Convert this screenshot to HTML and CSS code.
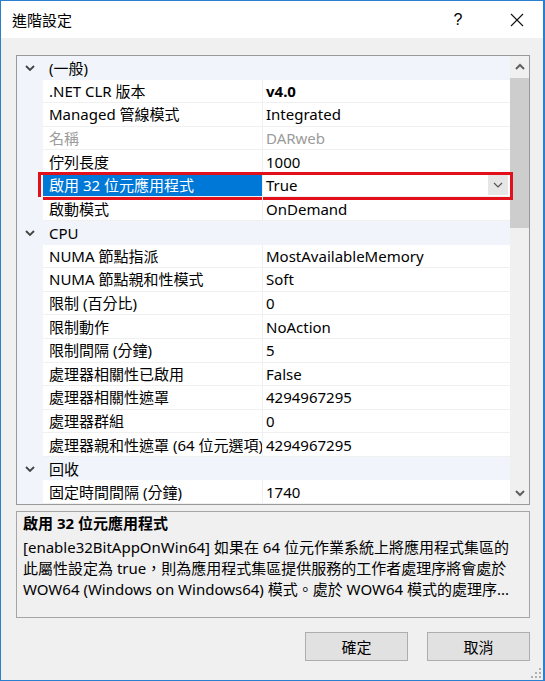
FILE: index.html
```html
<!DOCTYPE html>
<html lang="zh-Hant">
<head>
<meta charset="utf-8">
<title>進階設定</title>
<link rel="stylesheet" href="styles.css">
</head>
<body>
<div class="window">
  <div class="titlebar">
    <span class="title">進階設定</span>
    <span class="help">?</span>
    <span class="close"><svg width="14" height="14" viewBox="0 0 14 14"><path d="M1 1 L13 13 M13 1 L1 13" stroke="#111" stroke-width="1.1" fill="none"/></svg></span>
  </div>
  <div class="body">
    <div class="grid">
      <div class="rows">
        <div class="row cat"><span class="gut"><svg width="10" height="6" viewBox="0 0 10 6"><path d="M1 1 L5 5 L9 1" stroke="#444" stroke-width="1.8" fill="none"/></svg></span><span class="cat-name">(一般)</span></div>
        <div class="row prop"><span class="gut"></span><span class="name">.NET CLR 版本</span><span class="val bold">v4.0</span></div>
        <div class="row prop"><span class="gut"></span><span class="name">Managed 管線模式</span><span class="val">Integrated</span></div>
        <div class="row prop dis"><span class="gut"></span><span class="name">名稱</span><span class="val">DARweb</span></div>
        <div class="row prop"><span class="gut"></span><span class="name">佇列長度</span><span class="val">1000</span></div>
        <div class="row prop sel"><span class="gut"></span><span class="name">啟用 32 位元應用程式</span><span class="val">True<span class="dd"><svg width="10" height="6" viewBox="0 0 10 6"><path d="M1 1 L5 5 L9 1" stroke="#555" stroke-width="1.2" fill="none"/></svg></span></span></div>
        <div class="row prop"><span class="gut"></span><span class="name">啟動模式</span><span class="val">OnDemand</span></div>
        <div class="row cat"><span class="gut"><svg width="10" height="6" viewBox="0 0 10 6"><path d="M1 1 L5 5 L9 1" stroke="#444" stroke-width="1.8" fill="none"/></svg></span><span class="cat-name">CPU</span></div>
        <div class="row prop"><span class="gut"></span><span class="name">NUMA 節點指派</span><span class="val">MostAvailableMemory</span></div>
        <div class="row prop"><span class="gut"></span><span class="name">NUMA 節點親和性模式</span><span class="val">Soft</span></div>
        <div class="row prop"><span class="gut"></span><span class="name">限制 (百分比)</span><span class="val">0</span></div>
        <div class="row prop"><span class="gut"></span><span class="name">限制動作</span><span class="val">NoAction</span></div>
        <div class="row prop"><span class="gut"></span><span class="name">限制間隔 (分鐘)</span><span class="val">5</span></div>
        <div class="row prop"><span class="gut"></span><span class="name">處理器相關性已啟用</span><span class="val">False</span></div>
        <div class="row prop"><span class="gut"></span><span class="name">處理器相關性遮罩</span><span class="val">4294967295</span></div>
        <div class="row prop"><span class="gut"></span><span class="name">處理器群組</span><span class="val">0</span></div>
        <div class="row prop"><span class="gut"></span><span class="name">處理器親和性遮罩 (64 位元選項)</span><span class="val">4294967295</span></div>
        <div class="row cat"><span class="gut"><svg width="10" height="6" viewBox="0 0 10 6"><path d="M1 1 L5 5 L9 1" stroke="#444" stroke-width="1.8" fill="none"/></svg></span><span class="cat-name">回收</span></div>
        <div class="row prop"><span class="gut"></span><span class="name">固定時間間隔 (分鐘)</span><span class="val">1740</span></div>
      </div>
      <div class="scrollbar">
        <div class="sb-btn"><svg width="10" height="7" viewBox="0 0 10 7"><path d="M1 6 L5 2 L9 6" stroke="#606060" stroke-width="2" fill="none"/></svg></div>
        <div class="sb-track"><div class="thumb"></div></div>
        <div class="sb-btn"><svg width="10" height="7" viewBox="0 0 10 7"><path d="M1 1 L5 5 L9 1" stroke="#606060" stroke-width="2" fill="none"/></svg></div>
      </div>
    </div>
    <div class="desc">
      <div class="desc-title">啟用 32 位元應用程式</div>
      <div class="desc-text">[enable32BitAppOnWin64] 如果在 64 位元作業系統上將應用程式集區的<br>此屬性設定為 true，則為應用程式集區提供服務的工作者處理序將會處於<br>WOW64 (Windows on Windows64) 模式。處於 WOW64 模式的處理序...</div>
    </div>
    <div class="buttons">
      <button class="btn">確定</button>
      <button class="btn">取消</button>
    </div>
  </div>
  <div class="grip"><svg width="10" height="10" viewBox="0 0 10 10" fill="#b0b0b0"><rect x="8" y="0" width="2" height="2"/><rect x="4" y="4" width="2" height="2"/><rect x="8" y="4" width="2" height="2"/><rect x="0" y="8" width="2" height="2"/><rect x="4" y="8" width="2" height="2"/><rect x="8" y="8" width="2" height="2"/></svg></div>
</div>
</body>
</html>
```
FILE: styles.css
```css
* { box-sizing: border-box; }
html, body { margin: 0; padding: 0; background: #f0f0f0; }
body {
  font-family: "Noto Sans", "Noto Sans CJK TC", sans-serif;
  font-size: 15px;
  color: #000;
}
.window {
  width: 545px;
  height: 681px;
  border: 1px solid #2a7fd0;
  border-right-width: 2px;
  background: #f0f0f0;
  position: relative;
  display: flex;
  flex-direction: column;
}
.titlebar {
  height: 37px;
  background: #fff;
  display: flex;
  align-items: center;
  padding-left: 11px;
}
.title { flex: 1; font-size: 15px; }
.help {
  width: 20px;
  text-align: center;
  font-size: 16px;
  margin-right: 40px;
  font-family: "Liberation Sans", sans-serif;
  font-weight: 300;
}
.close { width: 18px; margin-right: 17px; display: flex; align-items: center; justify-content: center; }
.body {
  flex: 1;
  padding: 17px 13px 0 15px;
  display: flex;
  flex-direction: column;
}
.grid {
  height: 450px;
  border: 1px solid #999;
  background: #fff;
  display: flex;
}
.rows { flex: 1; display: flex; flex-direction: column; }
.row {
  height: 23.6px;
  display: flex;
  align-items: stretch;
  line-height: 22px;
  position: relative;
}
.gut {
  width: 26px;
  flex: none;
  background: #f1f5fb;
  display: flex;
  align-items: center;
  justify-content: center;
}
.cat { background: #f1f5fb; }
.cat-name { padding-left: 6px; display: flex; align-items: center; }
.name {
  width: 220px;
  flex: none;
  padding-left: 6px;
  border-bottom: 1px solid #f0f0f0;
  border-right: 1px solid #f0f0f0;
  white-space: nowrap;
  overflow: hidden;
  display: flex;
  align-items: center;
}
.val {
  flex: 1;
  padding-left: 3px;
  border-bottom: 1px solid #f0f0f0;
  display: flex;
  align-items: center;
  white-space: nowrap;
}
.bold { font-weight: 700; }
.dis .name, .dis .val { color: #9b9b9b; }
.sel .name { background: #0078d7; color: #fff; }
.sel .val { position: relative; }
.dd {
  position: absolute;
  right: 2px;
  top: 1px;
  bottom: 1px;
  width: 20px;
  background: #e6e6e6;
  display: flex;
  align-items: center;
  justify-content: center;
}
.sel::after {
  content: "";
  position: absolute;
  left: 21px;
  right: -3px;
  top: -2px;
  bottom: -3px;
  border: 3px solid #e3101b;
  pointer-events: none;
}
.scrollbar {
  width: 19px;
  flex: none;
  background: #f0f0f0;
  display: flex;
  flex-direction: column;
}
.sb-btn {
  height: 21px;
  display: flex;
  align-items: center;
  justify-content: center;
}
.sb-track { flex: 1; padding-top: 1px; }
.thumb { height: 150px; background: #cdcdcd; }
.desc {
  margin-top: 6px;
  height: 107px;
  border: 1px solid #a5a5a5;
  padding: 1px 6px 0 6px;
  overflow: hidden;
}
.desc-title { font-weight: 700; line-height: 21px; margin-bottom: 3px; }
.desc-text { line-height: 21px; white-space: nowrap; }
.buttons {
  margin-top: 14px;
  display: flex;
  justify-content: flex-end;
  gap: 19px;
}
.btn {
  width: 103px;
  height: 29px;
  background: #e1e1e1;
  border: 1px solid #adadad;
  font-family: "Noto Sans", "Noto Sans CJK TC", sans-serif;
  font-size: 15px;
  color: #000;
  padding: 0;
}
.grip {
  position: absolute;
  right: 2px;
  bottom: 2px;
  width: 10px;
  height: 10px;
  display: flex;
}
```
